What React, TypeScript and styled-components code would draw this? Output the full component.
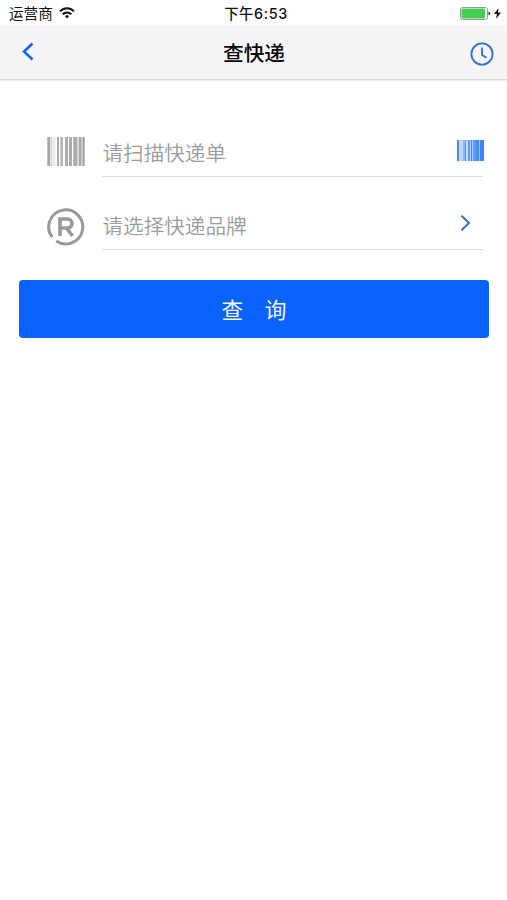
import React from "react";
import styled, { createGlobalStyle } from "styled-components";

const GlobalStyle = createGlobalStyle`
  * { box-sizing: border-box; }
  body {
    margin: 0;
    background: #fff;
    font-family: "Liberation Sans", "Noto Sans CJK SC", sans-serif;
  }
`;

const Screen = styled.div`
  min-height: 900px;
  background: #fff;
`;

const StatusBar = styled.header`
  display: grid;
  grid-template-columns: 1fr auto 1fr;
  align-items: center;
  height: 25px;
  padding: 2px 6px 0 9px;
  font-size: 14.6px;
  line-height: 22px;
  color: #111;
`;

const Carrier = styled.div`
  display: flex;
  align-items: center;
  gap: 6px;
`;

const Time = styled.div`
  padding-left: 2px;
  font-family: Inter, "Noto Sans CJK SC", sans-serif;
  font-size: 14.4px;
  font-weight: 500;
  letter-spacing: 0.6px;
  white-space: nowrap;
`;

const Power = styled.div`
  display: flex;
  align-items: center;
  justify-content: flex-end;
  gap: 3px;
`;

const NavBar = styled.nav`
  display: grid;
  grid-template-columns: 1fr auto 1fr;
  align-items: center;
  height: 55px;
  padding: 0 13px 0 22px;
  background: #f5f5f5;
  border-bottom: 1px solid #d6d6d6;
  box-shadow: 0 1px 1px #eee;
`;

const Title = styled.h1`
  margin: 0 8px 0 0;
  padding-top: 3px;
  font-size: 20.7px;
  line-height: 30px;
  font-weight: 500;
  color: #080808;
`;

const IconButton = styled.button<{ $end?: boolean }>`
  display: flex;
  justify-self: ${(p) => (p.$end ? "end" : "start")};
  padding: ${(p) => (p.$end ? "3px 0 0" : "0")};
  border: 0;
  background: none;
`;

const Form = styled.main`
  padding: 46px 18px 0 19px;
`;

const Field = styled.div`
  display: flex;
  align-items: center;
  height: 51px;
  margin: 0 6px 22px 28px;
`;

const FieldBody = styled.div`
  display: flex;
  align-items: center;
  justify-content: space-between;
  width: 381px;
  height: 51px;
  margin-left: 17px;
  border-bottom: 1px solid #dcdcdc;
`;

const Placeholder = styled.span`
  padding: 5px 0 0 0.5px;
  font-size: 20.6px;
  line-height: 30px;
  font-weight: 350;
  color: #9b9b9b;
`;

const Trailing = styled.span<{ $shift: number; $lift: number }>`
  display: flex;
  margin-right: ${(p) => p.$shift}px;
  padding-bottom: ${(p) => p.$lift}px;
`;

const Submit = styled.button`
  display: block;
  width: 100%;
  height: 58px;
  margin-top: 30px;
  padding: 4px 0 0;
  border: 0;
  border-radius: 4px;
  background: #0a62ff;
  color: #f2f6ff;
  font-family: inherit;
  font-size: 21.7px;
  line-height: 54px;
  white-space: pre;
`;

const grayBars: [number, number, string][] = [
  [0.3, 2.7, "#a5a5a5"], [3.5, 1.7, "#cfcfcf"], [6, 2.3, "#e8e8e8"],
  [10, 2, "#a8a8a8"], [13.3, 2.7, "#b5b5b5"], [18, 3, "#acacac"],
  [22, 3, "#acacac"], [26.2, 4.3, "#acacac"], [31.6, 3, "#aaa"],
  [34.6, 1, "#ccc"], [35.6, 2.1, "#a0a0a0"],
];

const blueBars: [number, number, string][] = [
  [0, 2, "#478cf5"], [2, 4, "#bdd8ff"], [6, 2, "#8bb7ff"], [8, 1, "#5c9aff"],
  [9, 2, "#c3dcff"], [11, 2, "#5c9aff"], [13, 1, "#b0cfff"], [14, 1, "#4389ff"],
  [15, 1, "#a9ccff"], [16, 3, "#5b98ff"], [19, 3, "#4389ff"], [22, 1, "#a0c4ff"],
  [23, 2, "#3a83ff"], [25, 2, "#3f84f5"],
];

const Barcode = ({ bars, width, height }: { bars: [number, number, string][]; width: number; height: number }) => (
  <svg width={width} height={height}>
    {bars.map(([x, w, fill]) => (
      <rect key={x} x={x} width={w} height={height} fill={fill} />
    ))}
  </svg>
);

const WifiIcon = () => (
  <svg width="16" height="13" viewBox="0 0 16 13" fill="none" stroke="#111" strokeWidth="2">
    <path d="M1 4.4C5 .3 11 .3 15 4.4M3.7 7.3C6 4.8 10 4.8 12.3 7.3" />
    <path d="M5.8 9.1C7.1 7.9 8.9 7.9 10.2 9.1L8 11.5Z" fill="#111" stroke="none" />
  </svg>
);

const BatteryIcon = () => (
  <svg width="31" height="13" viewBox="0 0 31 13">
    <rect x=".5" y=".5" width="27" height="12" rx="2" fill="#fff" stroke="#969696" />
    <rect x="1.5" y="1.5" width="23.5" height="10" rx="1" fill="#43cf55" />
    <path d="M28.5 4.5Q32 6.5 28.5 8.5Z" fill="#333" />
  </svg>
);

const BoltIcon = () => (
  <svg width="7" height="11" viewBox="0 0 7 11">
    <path d="M4.5 0L0 6H3L2 11L7 4.5H4Z" fill="#111" />
  </svg>
);

const BackIcon = () => (
  <svg width="12" height="20" viewBox="0 0 12 20" fill="none" stroke="#1163f3" strokeWidth="2.5">
    <path d="M10.5 1.5L2 9.5L10.5 17.5" />
  </svg>
);

const ClockIcon = () => (
  <svg width="24" height="24" viewBox="0 0 24 24" fill="none" stroke="#2b6fe8" strokeWidth="1.8">
    <circle cx="12" cy="12" r="10.6" />
    <path d="M12 5.5V13L16.5 15.8" />
  </svg>
);

const RegisteredIcon = () => (
  <svg width="38" height="42" viewBox="0 -4 38 42" fill="none" stroke="#999">
    <path d="M5.2 29.2A17 17 0 1 1 9.2 33" strokeWidth="3" />
    <path d="M13 28V11H20.5A4.2 4.2 0 0 1 20.5 20H13M19.5 20L25.5 28" strokeWidth="3.6" />
  </svg>
);

const ChevronIcon = () => (
  <svg width="11" height="18" viewBox="0 0 11 18" fill="none" stroke="#2c70df" strokeWidth="2">
    <path d="M1.5 1.8L9 9L1.5 16.2" />
  </svg>
);

export default function App() {
  return (
    <>
      <GlobalStyle />
      <Screen>
        <StatusBar>
          <Carrier>运营商<WifiIcon /></Carrier>
          <Time>下午6:53</Time>
          <Power><BatteryIcon /><BoltIcon /></Power>
        </StatusBar>
        <NavBar>
          <IconButton aria-label="返回"><BackIcon /></IconButton>
          <Title>查快递</Title>
          <IconButton $end aria-label="历史"><ClockIcon /></IconButton>
        </NavBar>
        <Form>
          <Field>
            <Barcode bars={grayBars} width={38} height={29} />
            <FieldBody>
              <Placeholder>请扫描快递单</Placeholder>
              <Trailing $shift={-1} $lift={1}><Barcode bars={blueBars} width={27} height={21} /></Trailing>
            </FieldBody>
          </Field>
          <Field>
            <RegisteredIcon />
            <FieldBody>
              <Placeholder>请选择快递品牌</Placeholder>
              <Trailing $shift={12} $lift={3}><ChevronIcon /></Trailing>
            </FieldBody>
          </Field>
          <Submit>{"查\u3000询"}</Submit>
        </Form>
      </Screen>
    </>
  );
}
